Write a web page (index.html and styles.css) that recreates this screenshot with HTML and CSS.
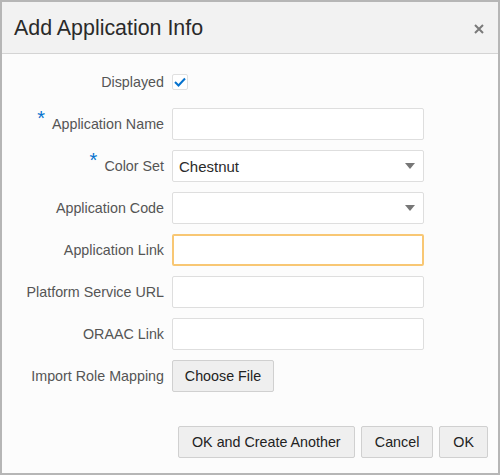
FILE: index.html
```html
<!DOCTYPE html>
<html>
<head>
<meta charset="utf-8">
<link rel="stylesheet" href="styles.css">
</head>
<body>
<div class="dialog">
  <div class="header">
    <div class="title">Add Application Info</div>
    <svg class="close" width="10" height="10" viewBox="0 0 10 10"><path d="M1 1L9 9M9 1L1 9" stroke="#7a7a7a" stroke-width="2" fill="none"/></svg>
  </div>
  <div class="form">
    <div class="label">Displayed</div>
    <div class="field"><span class="checkbox"><svg width="12" height="10" viewBox="0 0 12 10"><path d="M1 5L4.5 8.5L11 1.5" stroke="#0572ce" stroke-width="2" fill="none"/></svg></span></div>

    <div class="label"><span class="req">*</span>Application Name</div>
    <div class="field"><div class="input"></div></div>

    <div class="label"><span class="req">*</span>Color Set</div>
    <div class="field"><div class="input select"><span class="value">Chestnut</span><span class="arrow"></span></div></div>

    <div class="label">Application Code</div>
    <div class="field"><div class="input select"><span class="value"></span><span class="arrow"></span></div></div>

    <div class="label">Application Link</div>
    <div class="field"><div class="input focus"></div></div>

    <div class="label">Platform Service URL</div>
    <div class="field"><div class="input"></div></div>

    <div class="label">ORAAC Link</div>
    <div class="field"><div class="input"></div></div>

    <div class="label">Import Role Mapping</div>
    <div class="field"><div class="btn file">Choose File</div></div>
  </div>
  <div class="footer">
    <div class="btn wide">OK and Create Another</div>
    <div class="btn">Cancel</div>
    <div class="btn">OK</div>
  </div>
</div>
</body>
</html>
```

FILE: styles.css
```css
html, body {
  margin: 0;
  padding: 0;
  background: #fcfcfc;
}
.dialog {
  box-sizing: border-box;
  width: 500px;
  height: 475px;
  border: 2px solid #b6b6b6;
  background: #fcfcfc;
  font-family: "Liberation Sans", Arial, sans-serif;
  display: flex;
  flex-direction: column;
}
.header {
  height: 51px;
  background: #f2f2f2;
  border-bottom: 1px solid #d4d4d4;
  display: flex;
  align-items: center;
  justify-content: space-between;
  padding: 0 12px 0 12px;
}
.title {
  font-size: 21.4px;
  color: #2a2a2a;
  padding-top: 2px;
}
.close {
  margin-top: 3px;
  margin-right: 2px;
}
.form {
  display: grid;
  grid-template-columns: 162px 252px;
  column-gap: 8px;
  row-gap: 10px;
  grid-auto-rows: 32px;
  padding-top: 12px;
}
.label {
  font-size: 14.3px;
  line-height: 18px;
  color: #555;
  text-align: right;
  align-self: center;
  white-space: nowrap;
}
.req {
  color: #0572ce;
  font-size: 20px;
  line-height: 0;
  margin-right: 7px;
  position: relative;
  top: -4px;
}
.field {
  display: flex;
  align-items: center;
}
.checkbox {
  box-sizing: border-box;
  width: 16px;
  height: 16px;
  border: 1px solid #e0e0e0;
  border-radius: 2px;
  background: #fff;
  display: flex;
  align-items: center;
  justify-content: center;
}
.input {
  box-sizing: border-box;
  width: 252px;
  height: 32px;
  border: 1px solid #dedede;
  border-radius: 2px;
  background: #fff;
}
.input.focus {
  border: 2px solid #f8c774;
}
.select {
  display: flex;
  align-items: center;
  justify-content: space-between;
  padding: 0 8px 0 6px;
}
.value {
  font-size: 15px;
  color: #2a2a2a;
}
.arrow {
  width: 0;
  height: 0;
  border-left: 5px solid transparent;
  border-right: 5px solid transparent;
  border-top: 6px solid #777;
}
.btn {
  box-sizing: border-box;
  height: 32px;
  border: 1px solid #d0d0d0;
  border-radius: 2px;
  background: #efefef;
  color: #222;
  font-size: 14.3px;
  display: flex;
  align-items: center;
  justify-content: center;
  padding: 0 13px;
}
.btn.wide {
  width: 177px;
  padding: 0;
}
.btn.file {
  width: 102px;
  padding: 0;
}
.footer {
  display: flex;
  justify-content: flex-end;
  gap: 6px;
  padding: 34px 10px 0 0;
}
```
